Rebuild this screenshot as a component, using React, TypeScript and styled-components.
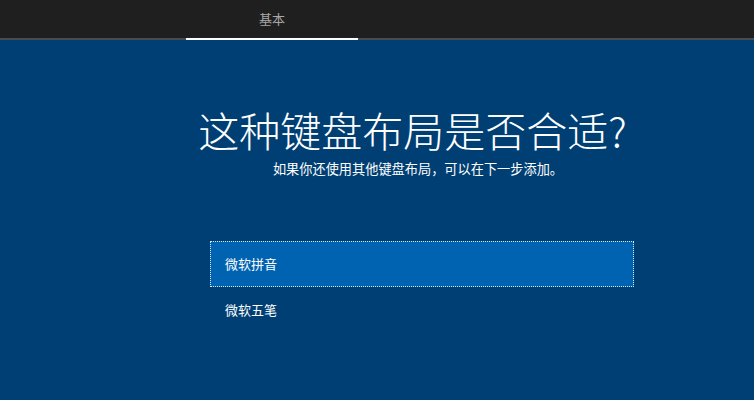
import styled, { createGlobalStyle } from "styled-components";

const GlobalStyle = createGlobalStyle`
  html, body {
    margin: 0;
    padding: 0;
    background: #003f74;
  }
  body {
    font-family: "Noto Sans CJK SC", "Noto Sans", sans-serif;
  }
`;

const Page = styled.div`
  width: 754px;
  height: 400px;
  display: flex;
  flex-direction: column;
  background: #003f74;
  overflow: hidden;
`;

const TopBar = styled.div`
  height: 38px;
  background: #1f1f1f;
  border-bottom: 2px solid #4b4b4b;
  display: flex;
  padding-left: 186px;
`;

const Tab = styled.div<{ $active?: boolean }>`
  width: 172px;
  display: flex;
  align-items: center;
  justify-content: center;
  padding-bottom: 1px;
  font-size: 13px;
  color: #a8a8a8;
  margin-bottom: -2px;
  border-bottom: 2px solid ${(p) => (p.$active ? "#ffffff" : "transparent")};
`;

const Content = styled.div`
  width: 424px;
  margin-left: 210px;
  display: flex;
  flex-direction: column;
  align-items: center;
  padding-top: 67px;
`;

const Title = styled.h1`
  margin: 0 19px 0 0;
  white-space: nowrap;
  font-size: 41px;
  font-weight: 300;
  line-height: 44px;
  color: #ffffff;
`;

const Subtitle = styled.p`
  margin: 9px 8px 0 0;
  white-space: nowrap;
  font-size: 13.2px;
  line-height: 18px;
  color: #ffffff;
`;

const List = styled.div`
  align-self: stretch;
  margin-top: 63px;
  display: flex;
  flex-direction: column;
`;

const Item = styled.div<{ $selected?: boolean }>`
  height: 46px;
  box-sizing: border-box;
  display: flex;
  align-items: center;
  padding-left: 14px;
  padding-bottom: 1px;
  font-size: 13px;
  color: #ffffff;
  background: ${(p) => (p.$selected ? "#0063b1" : "transparent")};
  border: 1px ${(p) => (p.$selected ? "dotted #d8e4f0" : "solid transparent")};
`;

export default function App(): JSX.Element {
  const layouts = ["微软拼音", "微软五笔"];

  return (
    <Page>
      <GlobalStyle />
      <TopBar>
        <Tab $active>基本</Tab>
      </TopBar>
      <Content>
        <Title>这种键盘布局是否合适?</Title>
        <Subtitle>如果你还使用其他键盘布局，可以在下一步添加。</Subtitle>
        <List>
          {layouts.map((name, i) => (
            <Item key={name} $selected={i === 0}>
              {name}
            </Item>
          ))}
        </List>
      </Content>
    </Page>
  );
}
